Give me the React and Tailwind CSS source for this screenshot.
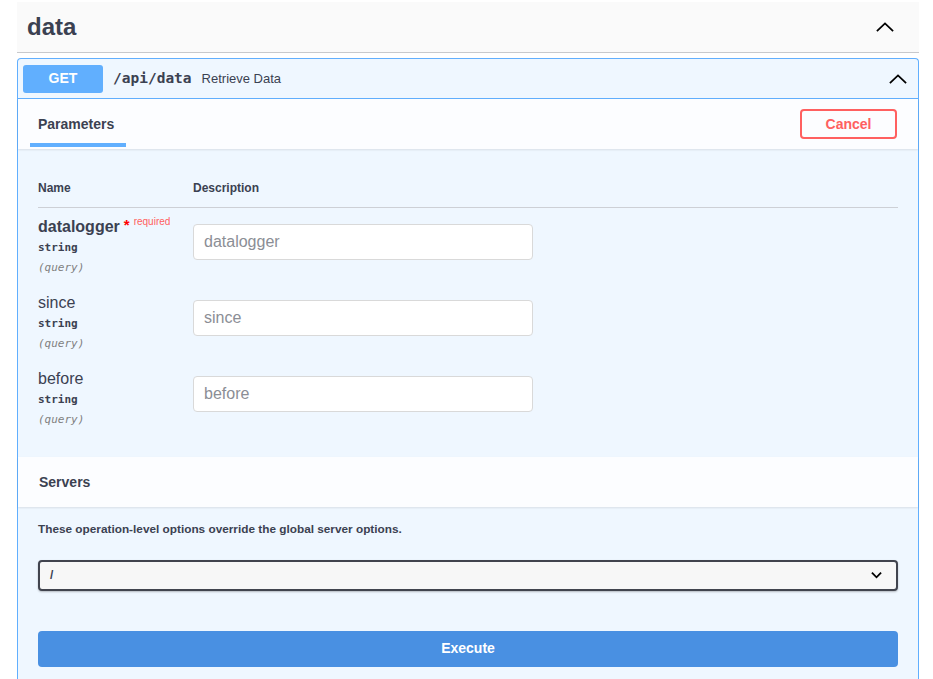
import { useState } from "react";

// Chevron drawn as a stroked path, pointing up
function ChevronUp({ className = "" }) {
  return (
    <svg viewBox="0 0 20 11" className={className} fill="none" stroke="currentColor" strokeWidth="2">
      <path d="M1 10 L10 1.5 L19 10" />
    </svg>
  );
}

function ChevronDown({ className = "" }) {
  return (
    <svg viewBox="0 0 12 8" className={className} fill="none" stroke="currentColor" strokeWidth="2">
      <path d="M1 1.5 L6 6.5 L11 1.5" />
    </svg>
  );
}

const params = [
  { name: "datalogger", required: true },
  { name: "since" },
  { name: "before" },
];

function ParamRow({ p }) {
  return (
    <div className="flex h-[76px]">
      <div className="mt-[-6px] w-[155px] shrink-0">
        <div className="flex items-start">
          <span className={p.required ? "text-[16px] font-bold leading-[20px]" : "text-[16px] leading-[20px]"}>
            {p.name}
          </span>
          {p.required && (
            <span className="ml-[4px] flex items-start text-[#ff0000] leading-none">
              <span className="text-[15px] font-bold leading-[14px] relative top-[1px]">*</span>
              <span className="ml-[4px] text-[10px] text-[#ff6060] font-medium leading-[12px] relative top-[-1px]">required</span>
            </span>
          )}
        </div>
        <div className="mt-[2px] font-['DejaVu_Sans_Mono',monospace] text-[11px] font-semibold leading-[18px]">string</div>
        <div className="mt-[2px] font-['DejaVu_Sans_Mono',monospace] text-[11px] italic leading-[18px] text-[#808080]">(query)</div>
      </div>
      <div className="pt-[1px]">
        <input
          placeholder={p.name}
          className="h-[36px] w-[340px] rounded-[4px] border border-[#d9d9d9] bg-white px-[10px] text-[16px] text-[#3b4151] placeholder:text-[#8b8e95] outline-none"
        />
      </div>
    </div>
  );
}

export default function App() {
  const [server] = useState("/");

  return (
    <div className="min-h-[679px] bg-white font-['Liberation_Sans',Arial,sans-serif] text-[#3b4151]">
      <div className="ml-[17px] w-[902px] pt-[2px]">
        {/* tag header */}
        <div className="flex h-[51px] items-center justify-between border-b border-[#c8c9cc] bg-[#fafafa] pl-[10px] pr-[25px]">
          <h3 className="text-[24px] font-bold leading-none">data</h3>
          <ChevronUp className="h-[10px] w-[18px] text-black" />
        </div>

        {/* operation block */}
        <div className="mt-[5px] rounded-t-[4px] border border-b-0 border-[#61affe] bg-[#eff7ff]">
          <div className="flex h-[40px] items-center border-b border-[#61affe] pl-[5px] pr-[11px]">
            <span className="flex h-[28px] w-[80px] items-center justify-center rounded-[3px] bg-[#61affe] text-[14px] font-bold text-white">
              GET
            </span>
            <span className="ml-[10px] font-['DejaVu_Sans_Mono',monospace] text-[14.5px] font-bold">/api/data</span>
            <span className="ml-[10px] text-[13px]">Retrieve Data</span>
            <ChevronUp className="ml-auto h-[10px] w-[18px] text-black" />
          </div>

          {/* parameters header */}
          <div className="flex h-[50px] items-center justify-between bg-[#fcfdff] pl-[12px] pr-[21px] shadow-[0_1px_2px_rgba(0,0,0,0.1)]">
            <div className="flex h-full flex-col justify-end">
              <div className="px-[8px] pb-[8px] text-[14px] font-bold">Parameters</div>
              <div className="mb-[2px] h-[4px] w-[96px] bg-[#61affe]" />
            </div>
            <button className="h-[30px] w-[97px] rounded-[4px] border-2 border-[#ff6060] text-[14px] font-bold text-[#ff6060]">
              Cancel
            </button>
          </div>

          {/* parameters table */}
          <div className="px-[20px] pt-[30px] pb-[6px]">
            <div className="flex h-[29px] items-start border-b border-[#cdd0d6] text-[12px] font-bold">
              <div className="w-[155px]">Name</div>
              <div>Description</div>
            </div>
            <div className="pt-[15px]">
              {params.map((p) => (
                <ParamRow key={p.name} p={p} />
              ))}
            </div>
          </div>

          {/* servers header */}
          <div className="flex h-[50px] items-center bg-[#fcfdff] pl-[21px] text-[14px] font-bold shadow-[0_1px_2px_rgba(0,0,0,0.1)]">
            Servers
          </div>

          <div className="px-[20px] pt-[14px] pb-[12px]">
            <p className="text-[11.8px] font-bold">These operation-level options override the global server options.</p>
            <div className="mt-[21px] flex h-[31px] items-center justify-between rounded-[4px] border-2 border-[#41444e] bg-[#f7f7f7] pl-[10px] pr-[14px] shadow-[0_1px_2px_rgba(0,0,0,0.25)]">
              <span className="text-[12px] font-bold">{server}</span>
              <ChevronDown className="h-[8px] w-[11px] text-black" />
            </div>
            <button className="mt-[40px] flex h-[36px] w-full items-center justify-center rounded-[4px] bg-[#4990e2] text-[14px] font-bold text-white">
              Execute
            </button>
          </div>
        </div>
      </div>
    </div>
  );
}
